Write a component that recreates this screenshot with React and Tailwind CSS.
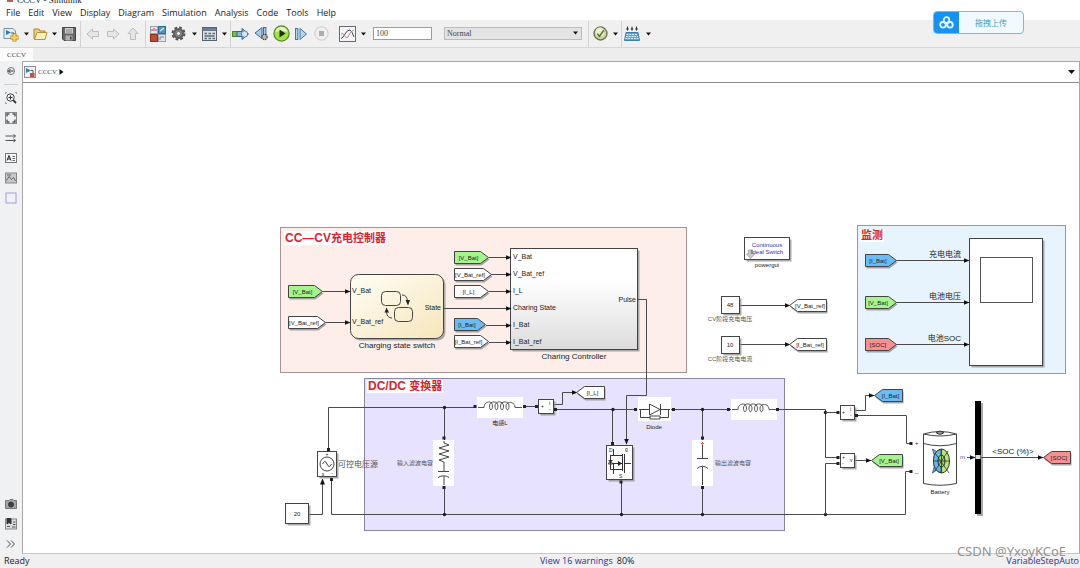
const MENUS = ['File', 'Edit', 'View', 'Display', 'Diagram', 'Simulation', 'Analysis', 'Code', 'Tools', 'Help']

const FILLS = { green: '#a6f58c', blue: '#6bbcf5', red: '#fa8f8f', white: '#ffffff' }

/* ---------- toolbar ---------- */

function ToolButton({ label, className = 'w-5', children }) {
  return (
    <button type="button" aria-label={label} className={`h-5 shrink-0 flex items-center justify-center ${className}`}>
      {children}
    </button>
  )
}

function Caret({ label }) {
  return (
    <button type="button" aria-label={label} className="h-5 w-3 shrink-0 flex items-center justify-center">
      <svg width="5" height="4" viewBox="0 0 5 4"><path d="M0 0.5H5L2.5 3.5Z" fill="#111" /></svg>
    </button>
  )
}

function Separator() {
  return <div className="h-[26px] w-px mx-0.5 shrink-0 bg-[#d2d2d2]" />
}

function NewIcon() {
  return (
    <svg width="16" height="16" viewBox="0 0 16 16">
      <path d="M1 2.5H10L12.5 5V12.5H1Z" fill="#e3eef7" stroke="#7a93a8" />
      <path d="M3 4L8 6.5L3 9Z" fill="#3479ad" />
      <path d="M8 7H11V10" fill="none" stroke="#456" />
      <path d="M11.5 7.5V15.5M7.5 11.5H15.5" stroke="#a77d1c" strokeWidth="4" />
      <path d="M11.5 8V15M8 11.5H15" stroke="#f7d552" strokeWidth="2.4" />
    </svg>
  )
}

function FolderIcon() {
  return (
    <svg width="15" height="14" viewBox="0 0 15 14">
      <path d="M1 12V2H6L7 4H12V12Z" fill="#f0ce72" stroke="#a98534" />
      <path d="M1.5 12.5L4 5.5H14L12 12.5Z" fill="#fdf0b8" stroke="#b5923e" />
    </svg>
  )
}

function SaveIcon() {
  return (
    <svg width="14" height="14" viewBox="0 0 14 14">
      <path d="M0.5 0.5H13.5V13.5H2L0.5 12Z" fill="#686868" stroke="#444" />
      <rect x="3" y="1" width="8" height="5.5" fill="#cfcfcf" />
      <path d="M4 3H10M4 5H10" stroke="#888" />
      <rect x="3.5" y="8.5" width="7" height="5" fill="#b2b2b2" />
      <rect x="8" y="9.5" width="1.6" height="3" fill="#444" />
    </svg>
  )
}

function ArrowIcon({ d }) {
  return (
    <svg width="14" height="14" viewBox="0 0 14 14">
      <path d={d} fill="#e6e6e6" stroke="#bdbdbd" />
    </svg>
  )
}

function LibraryIcon() {
  return (
    <svg width="16" height="16" viewBox="0 0 16 16">
      <rect x="0.5" y="0.5" width="7" height="7" fill="#e5e9ed" stroke="#98a0a8" />
      <rect x="8.5" y="0.5" width="7" height="7" fill="#4d95c8" stroke="#2d6f9e" />
      <rect x="0.5" y="8.5" width="7" height="7" fill="#c24a2c" stroke="#8e3118" />
      <rect x="8.5" y="8.5" width="7" height="7" fill="#dfe6ec" stroke="#98a0a8" />
      <path d="M2 5V3M4 5V2M6 5V3" stroke="#c36" />
      <path d="M10 5L14 2" stroke="#d8eefa" strokeWidth="1.3" />
      <path d="M10 14V11H14" fill="none" stroke="#68a" />
    </svg>
  )
}

function GearIcon() {
  return (
    <svg width="15" height="15" viewBox="0 0 15 15">
      <circle cx="7.5" cy="7.5" r="6" fill="none" stroke="#505050" strokeWidth="2" strokeDasharray="2.7 2" />
      <circle cx="7.5" cy="7.5" r="4.4" fill="#8f8f8f" stroke="#606060" strokeWidth="2.4" />
      <circle cx="7.5" cy="7.5" r="2" fill="#efefef" stroke="#555" strokeWidth="0.7" />
    </svg>
  )
}

function ExplorerIcon() {
  return (
    <svg width="15" height="14" viewBox="0 0 15 14">
      <rect x="0.5" y="0.5" width="14" height="13" fill="#dbe1e6" stroke="#5b646d" />
      <rect x="1" y="1" width="13" height="3" fill="#6b7d90" />
      <path d="M2.5 6.5H5M6.5 6.5H9M10.5 6.5H13M2.5 9H12.5M2.5 11.5H5M6.5 11.5H9M10.5 11.5H13" stroke="#56697b" strokeWidth="1.4" />
    </svg>
  )
}

function FastRestartIcon() {
  return (
    <svg width="18" height="14" viewBox="0 0 18 14">
      <rect x="0.5" y="4.5" width="6" height="5" fill="#7cba50" stroke="#4a8428" />
      <path d="M5 4.5H10V1.5L16.5 7L10 12.5V9.5H5Z" fill="#8db9dd" stroke="#34658f" />
      <circle cx="12.5" cy="7" r="3.2" fill="#d2e4f2" stroke="#4b799f" strokeWidth="0.9" />
    </svg>
  )
}

function StepBackIcon() {
  return (
    <svg width="15" height="15" viewBox="0 0 15 15">
      <path d="M8 1.5V12.5L1 7Z" fill="#a9cbe7" stroke="#3b6d98" />
      <rect x="9.5" y="1.5" width="2.4" height="8" fill="#a9cbe7" stroke="#3b6d98" />
      <circle cx="10.5" cy="11" r="2.6" fill="#bbb" stroke="#444" strokeWidth="1.3" strokeDasharray="1.4 0.7" />
    </svg>
  )
}

function RunIcon() {
  return (
    <svg width="17" height="17" viewBox="0 0 17 17">
      <circle cx="8.5" cy="8.5" r="7.6" fill="#a5e04b" stroke="#4f8b28" strokeWidth="1.2" />
      <path d="M2.6 7A6 6 0 0 1 14.4 7Q8.5 5 2.6 7Z" fill="#e3f7bd" />
      <path d="M6.5 4.5L12.5 8.5L6.5 12.5Z" fill="#183010" />
    </svg>
  )
}

function StepForwardIcon() {
  return (
    <svg width="14" height="14" viewBox="0 0 14 14">
      <rect x="1.5" y="1.5" width="2.4" height="11" fill="#b5d5ee" stroke="#3f77a5" />
      <path d="M6 1.5V12.5L12.5 7Z" fill="#b5d5ee" stroke="#3f77a5" />
    </svg>
  )
}

function StopIcon() {
  return (
    <svg width="15" height="15" viewBox="0 0 15 15">
      <circle cx="7.5" cy="7.5" r="6.7" fill="#efefef" stroke="#cacaca" />
      <rect x="5" y="5" width="5" height="5" fill="#adadad" />
    </svg>
  )
}

function ScopeIcon() {
  return (
    <svg width="17" height="16" viewBox="0 0 17 16">
      <rect x="0.5" y="0.5" width="16" height="15" fill="#f5f5f8" stroke="#6a6a72" />
      <path d="M2 12.5Q4 12 6 8T11 4Q13 5 15 11" fill="none" stroke="#4c4555" />
      <path d="M2 8Q4 6 6 10T10 9Q12 5 15 4" fill="none" stroke="#b58894" />
    </svg>
  )
}

function CheckIcon() {
  return (
    <svg width="15" height="15" viewBox="0 0 15 15">
      <circle cx="7.5" cy="7.5" r="6.5" fill="#c9d39c" stroke="#707558" strokeWidth="1.4" />
      <circle cx="7" cy="6" r="4.5" fill="#eaf0cc" />
      <path d="M4.3 7.8L6.5 10.2L10.8 4.3" fill="none" stroke="#55752b" strokeWidth="1.5" />
    </svg>
  )
}

function BuildIcon() {
  return (
    <svg width="16" height="16" viewBox="0 0 16 16">
      <path d="M3.5 0.5V3M8 0.5V3M12.5 0.5V3" stroke="#333" />
      <path d="M2 2.5H5L3.5 5ZM6.5 2.5H9.5L8 5ZM11 2.5H14L12.5 5Z" fill="#333" />
      <path d="M2 6.5H14L15.5 14.5H0.5Z" fill="#62a4d8" stroke="#3c7db2" />
      <path d="M2.5 8.5H13.5M2 10.5H14M1.5 12.5H14.5" stroke="#e3f1fb" strokeWidth="1.2" strokeDasharray="1.8 1" />
    </svg>
  )
}

function Toolbar() {
  return (
    <div className="h-7 flex items-center pl-0.5 bg-[#f0f0f0] border-b border-[#d6d6d6]">
      <ToolButton label="New model" className="w-[18px]"><NewIcon /></ToolButton>
      <Caret label="New options" />
      <ToolButton label="Open" className="w-4"><FolderIcon /></ToolButton>
      <Caret label="Open recent" />
      <ToolButton label="Save" className="w-[18px]"><SaveIcon /></ToolButton>
      <Separator />
      <ToolButton label="Back"><ArrowIcon d="M1 7L6.5 2V4.5H12.5V9.5H6.5V12Z" /></ToolButton>
      <ToolButton label="Forward"><ArrowIcon d="M13 7L7.5 2V4.5H1.5V9.5H7.5V12Z" /></ToolButton>
      <ToolButton label="Up to parent"><ArrowIcon d="M7 1L12 6.5H9.5V12.5H4.5V6.5H2Z" /></ToolButton>
      <Separator />
      <ToolButton label="Library browser"><LibraryIcon /></ToolButton>
      <ToolButton label="Model configuration"><GearIcon /></ToolButton>
      <Caret label="Configuration options" />
      <ToolButton label="Model explorer" className="w-[18px]"><ExplorerIcon /></ToolButton>
      <Caret label="Explorer options" />
      <div className="h-[26px] w-px shrink-0 bg-[#d2d2d2]" />
      <ToolButton label="Fast restart"><FastRestartIcon /></ToolButton>
      <ToolButton label="Step back"><StepBackIcon /></ToolButton>
      <ToolButton label="Run"><RunIcon /></ToolButton>
      <ToolButton label="Step forward"><StepForwardIcon /></ToolButton>
      <ToolButton label="Stop"><StopIcon /></ToolButton>
      <ToolButton label="Simulation data inspector" className="w-5 ml-1.5"><ScopeIcon /></ToolButton>
      <Caret label="Inspector options" />
      <input
        aria-label="Simulation stop time"
        defaultValue="100"
        className="ml-1 w-[59px] h-[13px] shrink-0 px-0.5 bg-white border border-[#9c9c9c] font-['Liberation_Serif',serif] text-[8px] leading-[11px] text-[#444]"
      />
      <div className="relative ml-3 w-[138px] h-[13px] shrink-0">
        <select
          aria-label="Simulation mode"
          defaultValue="Normal"
          className="block appearance-none w-full h-full px-0.5 bg-[#e3e3e3] border border-[#bcbcbc] font-['Liberation_Serif',serif] text-[8px] leading-[11px] text-[#444]"
        >
          <option>Normal</option>
          <option>Accelerator</option>
        </select>
        <svg className="absolute right-1 top-1 pointer-events-none" width="5" height="4" viewBox="0 0 5 4">
          <path d="M0 0.5H5L2.5 3.5Z" fill="#111" />
        </svg>
      </div>
      <div className="w-1 shrink-0" />
      <Separator />
      <ToolButton label="Model advisor" className="w-[18px]"><CheckIcon /></ToolButton>
      <Caret label="Advisor options" />
      <div className="h-[26px] w-px shrink-0 bg-[#d2d2d2]" />
      <ToolButton label="Build"><BuildIcon /></ToolButton>
      <Caret label="Build options" />
    </div>
  )
}

/* ---------- palette on the left ---------- */

function SideButton({ label, children }) {
  return (
    <button type="button" aria-label={label} className="w-full h-5 flex items-center justify-center">
      <svg width="12" height="12" viewBox="0 0 12 12" fill="none" stroke="#555">{children}</svg>
    </button>
  )
}

function Sidebar() {
  return (
    <aside className="w-[22px] shrink-0 flex flex-col bg-[#f0f1f3]">
      <SideButton label="Hide browser">
        <circle cx="6" cy="6" r="3.5" stroke="#777" />
        <path d="M3.5 6H8.5M5.5 4L3.5 6L5.5 8" stroke="#333" />
      </SideButton>
      <div className="h-px mx-1 my-[3px] bg-[#d0d0d0]" />
      <SideButton label="Zoom">
        <path d="M0.5 2V0.5H2M10 0.5H11.5V2M0.5 10V11.5H2" stroke="#999" />
        <circle cx="5.5" cy="5.5" r="3.7" stroke="#444" />
        <path d="M3.5 5.5H7.5M5.5 3.5V7.5" stroke="#333" />
        <path d="M8.2 8.2L11 11" stroke="#333" strokeWidth="1.8" />
      </SideButton>
      <SideButton label="Fit to view">
        <rect x="0.5" y="0.5" width="11" height="11" stroke="#888" />
        <path d="M2 4.5V2H4.5M7.5 2H10V4.5M10 7.5V10H7.5M4.5 10H2V7.5" stroke="#555" strokeWidth="1.4" />
      </SideButton>
      <SideButton label="Signal line">
        <path d="M0.5 4H10.5M0.5 8.5H10.5M8.5 2.5L10.5 4L8.5 5.5M8.5 7L10.5 8.5L8.5 10" />
      </SideButton>
      <SideButton label="Annotation">
        <rect x="0.5" y="1.5" width="11" height="9" fill="#f8f8f8" stroke="#777" />
        <path d="M2 8.5L4 3.5L6 8.5M2.8 7H5.2" stroke="#222" />
        <path d="M7.5 4.5H10M7.5 6.5H10M7.5 8.5H10" stroke="#666" />
      </SideButton>
      <SideButton label="Image">
        <rect x="0.5" y="1" width="11" height="10" fill="#c8c8c8" stroke="#888" />
        <path d="M1.5 8.5L4 4.5L6.5 7.5L8.5 5.5L10.5 9M2 3H6" stroke="#666" />
      </SideButton>
      <SideButton label="Area">
        <rect x="1" y="1" width="10" height="10" fill="#f0f0ff" stroke="#a2a0cc" />
      </SideButton>
      <div className="mt-auto">
        <SideButton label="Screenshot">
          <path d="M0.5 2.5H4L5 1.5H8L9 2.5H11.5V10.5H0.5Z" fill="#a5a5a5" stroke="#777" />
          <circle cx="6" cy="6.5" r="2.5" fill="#444" stroke="#333" />
        </SideButton>
        <SideButton label="Model data">
          <rect x="0.5" y="1" width="11" height="10" fill="#ddd" stroke="#888" />
          <path d="M2 0.5H6V6L4 4.5L2 6Z" fill="#333" stroke="#333" />
          <path d="M8 4H10.5M2 8.5H5M8 6.5H10.5M7 9H10.5" stroke="#555" />
        </SideButton>
        <SideButton label="Expand">
          <path d="M2 2.5L5.5 6L2 9.5M6 2.5L9.5 6L6 9.5" stroke="#444" />
        </SideButton>
      </div>
    </aside>
  )
}

/* ---------- diagram parts ---------- */

function T({ x, y, size = 7, anchor = 'start', fill = '#222', bold, children }) {
  return (
    <text x={x} y={y} fontSize={size} textAnchor={anchor} fill={fill} fontWeight={bold ? 700 : 400}>
      {children}
    </text>
  )
}

function Box({ x, y, w, h, fill = '#fff', rx = 0 }) {
  return (
    <g>
      <rect x={x + 2} y={y + 2} width={w} height={h} rx={rx} fill="#8f8f8f" opacity="0.75" />
      <rect x={x} y={y} width={w} height={h} rx={rx} fill={fill} stroke="#444" />
    </g>
  )
}

// From / Goto tag; `left` turns the point to the left
function Tag({ x, y, w, color = 'white', left, children }) {
  const h = 12
  const tip = 8
  const pts = left
    ? [[x, y + h / 2], [x + tip, y], [x + w, y], [x + w, y + h], [x + tip, y + h]]
    : [[x, y], [x + w - tip, y], [x + w, y + h / 2], [x + w - tip, y + h], [x, y + h]]
  const points = pts.map((p) => p.join(',')).join(' ')
  return (
    <g>
      <polygon points={points} fill="#8a8a8a" opacity="0.75" transform="translate(1 2)" />
      <polygon points={points} fill={FILLS[color]} stroke="#444" />
      <T x={left ? x + w / 2 + 2 : x + w / 2 - 3} y={y + 8} size={6} anchor="middle">{children}</T>
    </g>
  )
}

function Wire({ d, arrow }) {
  return <path d={d} fill="none" stroke="#4a4a4a" markerEnd={arrow ? 'url(#arrow)' : undefined} />
}

function Port({ x, y }) {
  return <rect x={x - 1.5} y={y - 1.5} width="3" height="3" fill="#222" />
}

function Dot({ x, y }) {
  return <circle cx={x} cy={y} r="1.7" fill="#1c1c30" />
}

function Coil({ x, y }) {
  return (
    <g>
      <rect x={x} y={y} width="46" height="21" fill="#fff" />
      <path
        transform={`translate(${x} ${y})`}
        d="M1 10.5H7C7 4 15.5 3 15.5 9C15.5 14 12.5 14 12.500 9C12.500 3.500 21 3.500 21 9C21 14 18 14 18 9C18 3.500 26.500 3.500 26.500 9C26.500 14 23.500 14 23.500 9C23.500 3.500 32 3.500 32 9C32 14 29 14 29 9C29 4 38 4 38 10.500H45"
        fill="none"
        stroke="#444"
        strokeWidth="0.900"
      />
    </g>
  )
}

function ControllerArea() {
  return (
    <g>
      <rect x="280.5" y="227.5" width="406" height="145" fill="#fdeeea" stroke="#a39394" />
      <rect x="284" y="231" width="104" height="14" fill="#fff" />
      <text x="285" y="242" fontWeight="700" fill="#d8232f" fontSize="12">
        CC—CV<tspan fontSize="11">充电控制器</tspan>
      </text>

      <Box x={350.5} y={274.5} w={93} h={64} rx={8} fill="url(#cream)" />
      <g fill="none" stroke="#444">
        <rect x="381.5" y="291.5" width="19" height="14" rx="4" />
        <rect x="394.5" y="307.5" width="18" height="14" rx="4" />
        <path d="M402 295Q407 295 407.5 301" />
        <path d="M392 318Q387 318 386.5 312" />
      </g>
      <path d="M405.5 300H410L408 305.5ZM384.5 312.5H389L386.5 307.5Z" fill="#222" />
      <T x={352} y={293}>V_Bat</T>
      <T x={352} y={324}>V_Bat_ref</T>
      <T x={441} y={310} anchor="end">State</T>
      <T x={397} y={348} size={8} anchor="middle">Charging state switch</T>

      <Wire d="M322 291.5H350" arrow />
      <Wire d="M325 322.5H350" arrow />
      <Tag x={288.5} y={285.5} w={34} color="green">[V_Bat]</Tag>
      <Tag x={288.5} y={316.5} w={37}>[V_Bat_ref]</Tag>

      <Box x={510.5} y={248.5} w={127} h={101} fill="url(#steel)" />
      <Wire d="M489 257.5H511" arrow />
      <Wire d="M491 274.5H511" arrow />
      <Wire d="M489 291.5H511" arrow />
      <Wire d="M444 308.5H511" arrow />
      <Wire d="M486 325.5H511" arrow />
      <Wire d="M489 342.5H511" arrow />
      <Tag x={454.5} y={251.5} w={34} color="green">[V_Bat]</Tag>
      <Tag x={454.5} y={268.5} w={37}>[V_Bat_ref]</Tag>
      <Tag x={454.5} y={285.5} w={34}>[I_L]</Tag>
      <Tag x={454.5} y={318.5} w={31} color="blue">[I_Bat]</Tag>
      <Tag x={454.5} y={335.5} w={34}>[I_Bat_ref]</Tag>
      <T x={513} y={259}>V_Bat</T>
      <T x={513} y={276}>V_Bat_ref</T>
      <T x={513} y={293}>I_L</T>
      <T x={513} y={310}>Charing State</T>
      <T x={513} y={327}>I_Bat</T>
      <T x={513} y={344}>I_Bat_ref</T>
      <T x={636} y={302} anchor="end">Pulse</T>
      <T x={574} y={359} size={8} anchor="middle">Charing Controller</T>
    </g>
  )
}

function References() {
  return (
    <g>
      <Box x={744.5} y={237.5} w={45} h={22} />
      <path d="M748.5 250H752.5V254H754.5L750.5 258.5L746.5 254H748.5Z" fill="#ccc" stroke="#aaa" />
      <T x={767} y={247} size={6} anchor="middle" fill="#3a30b0">Continuous</T>
      <T x={767} y={254} size={6} anchor="middle" fill="#3a30b0">Ideal Switch</T>
      <T x={767} y={267} size={6} anchor="middle">powergui</T>

      <Wire d="M740 305.5H790" arrow />
      <Box x={721.5} y={296.5} w={18} h={17} />
      <T x={730} y={307} size={6} anchor="middle">48</T>
      <T x={730} y={321} size={6} anchor="middle" fill="#555">CV阶段充电电压</T>
      <Tag x={789.5} y={299.5} w={37} left>[V_Bat_ref]</Tag>

      <Wire d="M740 344.5H790" arrow />
      <Box x={721.5} y={336.5} w={18} h={17} />
      <T x={730} y={347} size={6} anchor="middle">10</T>
      <T x={730} y={361} size={6} anchor="middle" fill="#555">CC阶段充电电流</T>
      <Tag x={789.5} y={338.5} w={37} left>[I_Bat_ref]</Tag>
    </g>
  )
}

function MonitorArea() {
  return (
    <g>
      <rect x="857.5" y="225.5" width="208" height="148" fill="#e7f4fe" stroke="#8c9bab" />
      <rect x="860" y="229" width="24" height="13" fill="#fff" />
      <T x={861} y={239} size={11} bold fill="#d8232f">监测</T>
      <Box x={969.5} y={238.5} w={73} h={127} />
      <rect x="980.5" y="257.5" width="52" height="45" fill="#fff" stroke="#555" />
      <Wire d="M896 260.5H969" arrow />
      <Wire d="M896 302.5H969" arrow />
      <Wire d="M896 344.5H969" arrow />
      <Tag x={865.5} y={254.5} w={31} color="blue">[I_Bat]</Tag>
      <Tag x={865.5} y={296.5} w={31} color="green">[V_Bat]</Tag>
      <Tag x={865.5} y={338.5} w={31} color="red">[SOC]</Tag>
      <T x={961} y={257} size={8} anchor="end">充电电流</T>
      <T x={961} y={299} size={8} anchor="end">电池电压</T>
      <T x={961} y={341} size={8} anchor="end">电池SOC</T>
    </g>
  )
}

function ConverterArea() {
  return (
    <g>
      <rect x="364.5" y="378.5" width="420" height="152" fill="#e7e3fe" stroke="#8884a6" />
      <rect x="367" y="380" width="76" height="13" fill="#fff" />
      <text x="368" y="390" fontWeight="700" fill="#d8232f" fontSize="12">
        DC/DC <tspan fontSize="11">变换器</tspan>
      </text>

      {/* power wires */}
      <Wire d="M328.5 449V407.5H475" />
      <Wire d="M331.5 478V514.5H905.5V471.5H911" />
      <Wire d="M309 514.5H322.5V479" arrow />
      <Wire d="M444.5 407.5V440M444.5 486V514.5" />
      <Wire d="M523 406.5H538" />
      <Wire d="M554 404.5H562.5V392.5H577" arrow />
      <Wire d="M554 409.5H637M671 409.5H731M776 409.5H825.5V457.5H838" />
      <Wire d="M612.5 409.5V444" />
      <Wire d="M638 299.5H646.5V395.5H626.5V444" arrow />
      <Wire d="M621.5 481V514.5" />
      <Wire d="M702.5 409.5V440M702.5 486V514.5" />

      {/* controlled source */}
      <Box x={317.5} y={451.5} w={19} h={25} />
      <circle cx="327" cy="464" r="7" fill="#fff" stroke="#444" />
      <path d="M322.5 464Q325 459 327 464T331.5 464" fill="none" stroke="#444" />
      <T x={327} y={456} size={5} anchor="middle">+</T>
      <T x={323} y={476} size={5} anchor="middle">s</T>
      <T x={332} y={475} size={5} anchor="middle">-</T>
      <Port x={328.5} y={449.5} />
      <Port x={331.5} y={479.5} />
      <T x={338} y={467} size={8} fill="#555">可控电压源</T>
      <Box x={285.5} y={503.5} w={23} h={20} />
      <T x={297} y={516} size={6} anchor="middle">20</T>

      {/* input filter */}
      <rect x="433" y="440" width="21" height="46" fill="#fff" />
      <path d="M444 441V443L449 445L439 448L449 451L439 454L449 457L439 460L444 462V471M438 471.5H449M438 477.5Q444 474 449 477.5M444 476V485" fill="none" stroke="#444" />
      <T x={397} y={465} size={6} fill="#555">输入滤波电容</T>

      <Coil x={477} y={397} />
      <T x={500} y={425} size={6} anchor="middle">电感L</T>
      <Box x={538.5} y={399.5} w={15} h={14} />
      <T x={541} y={408} size={5}>+</T>
      <T x={549} y={405} size={5}>i</T>
      <T x={549} y={411} size={5}>-</T>
      <Tag x={576.5} y={386.5} w={28} left>[I_L]</Tag>

      {/* diode */}
      <rect x="638" y="397" width="33" height="24" fill="#fff" />
      <path d="M639 409.5H649M660 409.5H670M649.5 404V415L660 409.5ZM660.5 404V415M640.5 409.5V417.5H650M660 417.5H668.5V409.5M650 416V419H660V416Z" fill="none" stroke="#444" />
      <T x={654} y={429} size={6} anchor="middle">Diode</T>

      {/* mosfet */}
      <Box x={606.5} y={445.5} w={26} h={34} />
      <path d="M613.5 449V455.5H622M610 455.5H622M622.5 454V471M624.5 454V473M625 463.5H631M612 463.5H622M613.5 463.5V474M610.5 455.5V469.5H622M608.5 464H612.5L610.5 460ZM608.5 460.5H612.5" fill="none" stroke="#333" />
      <path d="M622 463.5L618 461V466Z" fill="#222" />
      <T x={609} y={452} size={5}>D</T>
      <T x={625} y={451} size={5}>g</T>
      <T x={619} y={478} size={5}>S</T>

      {/* output filter */}
      <rect x="692" y="440" width="21" height="46" fill="#fff" />
      <path d="M702.5 443V458.5M697 458.5H708M697 468.5Q702.5 464 708 468.5M702.5 466.5V485" fill="none" stroke="#444" />
      <path d="M701 443.5H704M702.5 442V445" stroke="#d66" />
      <T x={715} y={465} size={6} fill="#555">输出滤波电容</T>
      <Coil x={731} y={399} />

      <Port x={475} y={406.5} />
      <Port x={524.5} y={406.5} />
      <Port x={536.5} y={406.5} />
      <Port x={555.5} y={409.5} />
      <Port x={635.5} y={409.5} />
      <Port x={673.5} y={409.5} />
      <Port x={728.5} y={409.5} />
      <Port x={777.5} y={409.5} />
      <Port x={444} y={438} />
      <Port x={444} y={487.5} />
      <Port x={702.5} y={438} />
      <Port x={702.5} y={487.5} />
      <Port x={612.5} y={443.5} />
      <Port x={621} y={482} />
      <Dot x={444.5} y={407.5} />
      <Dot x={444.5} y={514.5} />
      <Dot x={613} y={409.5} />
      <Dot x={621.5} y={514.5} />
      <Dot x={702.5} y={409.5} />
      <Dot x={702.5} y={514.5} />
      <Dot x={825.5} y={412.5} />
      <Dot x={825.5} y={514.5} />
    </g>
  )
}

function BatterySide() {
  return (
    <g>
      <Wire d="M825.5 412.5H838" />
      <Wire d="M838 463.5H825.5V514.5" />
      <Wire d="M855 410.5H865.5V395.5H874" arrow />
      <Wire d="M856 415.5H906.5V443.5H911" />
      <Wire d="M855 460.5H871" arrow />
      <Box x={840.5} y={405.5} w={14} h={14} />
      <Box x={840.5} y={453.5} w={14} h={14} />
      <T x={842} y={414} size={5}>+</T>
      <T x={850} y={411} size={5}>i</T>
      <T x={850} y={417} size={5}>-</T>
      <T x={842} y={459} size={5}>+</T>
      <T x={850} y={462} size={5}>v</T>
      <T x={842} y={465} size={5}>-</T>
      <Port x={838} y={412.5} />
      <Port x={838} y={457.5} />
      <Port x={838} y={463.5} />
      <Port x={856.5} y={415.5} />
      <Port x={911} y={443.5} />
      <Port x={911} y={471.5} />
      <T x={915} y={445} size={6}>+</T>
      <T x={915} y={473} size={6}>_</T>
      <Tag x={874.5} y={389.5} w={28} color="blue" left>[I_Bat]</Tag>
      <Tag x={871.5} y={454.5} w={31} color="green" left>[V_Bat]</Tag>

      {/* battery cell */}
      <path d="M923.5 434V483.5Q940 487 956.5 483.5V434" fill="#fff" stroke="#444" />
      <path d="M923.5 434Q940 429 956.5 434Q940 438 923.5 434ZM923.5 443.5Q940 448 956.5 443.5" fill="#fff" stroke="#444" />
      <path d="M936 432.5Q940 429.5 944 432.5Q940 436 936 432.5Z" fill="#999" stroke="#333" />
      <path d="M932.5 449Q937 461 932.5 473L942 466V455Z" fill="#65b9ec" stroke="#345" strokeWidth="0.8" />
      <ellipse cx="941.5" cy="461" rx="8" ry="12" fill="#b7e873" stroke="#333" />
      <path d="M941 449.5C931 451 931 471 941 472.5Z" fill="#65b9ec" stroke="#333" strokeWidth="0.8" />
      <ellipse cx="941.5" cy="461" rx="3.5" ry="6" fill="#9ed46c" stroke="#222" />
      <path d="M933 461H950M941.5 449V473M935 453L949 473M935 471L948 451" stroke="#234" strokeWidth="0.8" fill="none" />
      <T x={940} y={494} size={6} anchor="middle">Battery</T>
      <T x={960} y={459} size={6} fill="#55508a">m</T>

      {/* bus selector */}
      <Wire d="M967 457.5H975" arrow />
      <rect x="977" y="403" width="6" height="113" fill="#aaa" />
      <rect x="975" y="401" width="6" height="113" fill="#000" />
      <rect x="975.5" y="455" width="5" height="4" fill="#ddd" />
      <Wire d="M981 457.5H1043" arrow />
      <T x={1013} y={454} size={8} anchor="middle">&lt;SOC (%)&gt;</T>
      <Tag x={1043.5} y={451.5} w={27} color="red" left>[SOC]</Tag>
    </g>
  )
}

function Diagram() {
  return (
    <svg
      viewBox="23 83 1056 470"
      className="block w-full font-['Liberation_Sans','Noto_Sans_CJK_SC',sans-serif]"
      role="img"
      aria-label="CCCV model"
    >
      <defs>
        <marker id="arrow" viewBox="0 0 6 6" refX="5.5" refY="3" markerWidth="6" markerHeight="6" markerUnits="userSpaceOnUse" orient="auto">
          <path d="M0 0.5L6 3L0 5.5Z" fill="#111" />
        </marker>
        <linearGradient id="cream" x1="0" y1="0" x2="1" y2="1">
          <stop offset="0" stopColor="#fffdf4" />
          <stop offset="1" stopColor="#f7e6bd" />
        </linearGradient>
        <linearGradient id="steel" x1="0" y1="0" x2="0" y2="1">
          <stop offset="0.3" stopColor="#fff" />
          <stop offset="1" stopColor="#dcdcdc" />
        </linearGradient>
      </defs>
      <ControllerArea />
      <References />
      <MonitorArea />
      <ConverterArea />
      <BatterySide />
    </svg>
  )
}

function ModelIcon() {
  return (
    <svg width="12" height="12" viewBox="0 0 12 12">
      <rect x="0.5" y="0.5" width="11" height="11" fill="#eef2f6" stroke="#8b8f9b" />
      <path d="M2 2L7 4.5L2 7Z" fill="#3b7db3" />
      <path d="M7 4.5H9V7" fill="none" stroke="#555" />
      <rect x="6" y="7" width="4.5" height="4" fill="#b8553f" />
    </svg>
  )
}

function UploadWidget() {
  return (
    <button
      type="button"
      className="absolute right-14 top-[11px] w-[91px] h-[23px] flex items-stretch overflow-hidden rounded border border-[#6fc0dd] bg-[#f0faff]"
    >
      <span className="w-[25px] flex items-center justify-center bg-[#1592f2]">
        <svg width="15" height="13" viewBox="0 0 15 13" fill="none" stroke="#e9f8ff" strokeWidth="1.8">
          <circle cx="7.5" cy="4" r="2.8" />
          <circle cx="4" cy="8.8" r="2.8" />
          <circle cx="11" cy="8.8" r="2.8" />
        </svg>
      </span>
      <span className="flex-1 flex items-center justify-center font-['Noto_Sans_CJK_SC',sans-serif] text-[8px] leading-none text-[#3f9fc0]">
        拖拽上传
      </span>
    </button>
  )
}

export default function App() {
  return (
    <div className="relative min-h-screen flex flex-col overflow-hidden bg-[#f0f0f0] font-['Open_Sans',sans-serif] text-[9px] leading-3 text-[#222]">
      <header className="bg-white">
        <div className="h-[5px] flex items-end gap-1 pl-[7px] overflow-hidden font-['Liberation_Serif',serif] text-[9px] leading-[10px]">
          <span className="w-1.5 h-1 mb-[3px] bg-[#b8604c]" />
          <span>CCCV - Simulink</span>
        </div>
        <nav className="h-[15px] flex items-center gap-2 pl-1.5">
          {MENUS.map((m) => (
            <button key={m} type="button">{m}</button>
          ))}
        </nav>
      </header>

      <Toolbar />

      <div className="h-[13px] flex bg-[#ededed]">
        <button type="button" className="w-[33px] bg-[#fbfbfb] font-['Liberation_Serif',serif] text-[7px] leading-3 text-[#444]">CCCV</button>
      </div>

      <div className="flex-1 flex">
        <Sidebar />
        <main className="flex-1 min-w-0 flex flex-col bg-white border border-[#a8a8a8] border-b-[#c8c8c8]">
          <div className="h-[21px] flex items-center pl-px pr-1 gap-0.5 border-b border-[#8f8f8f]">
            <ModelIcon />
            <a href="#cccv" className="font-['Liberation_Serif',serif] text-[7px] text-[#444]">CCCV</a>
            <svg width="5" height="6" viewBox="0 0 5 6"><path d="M0.5 0L4.5 3L0.5 6Z" fill="#111" /></svg>
            <button type="button" aria-label="Path history" className="ml-auto">
              <svg width="7" height="4" viewBox="0 0 7 4"><path d="M0 0H7L3.5 4Z" fill="#111" /></svg>
            </button>
          </div>
          <Diagram />
        </main>
      </div>

      <footer className="h-[14px] flex items-center">
        <span className="w-1/2 pl-1">Ready</span>
        <a href="#warnings" className="text-[#302f8c]">View 16 warnings</a>
        <span className="ml-1">80%</span>
        <span className="ml-auto pr-px text-[#302f8c]">VariableStepAuto</span>
      </footer>

      <UploadWidget />
      <div className="absolute right-[14px] bottom-[9px] font-['Noto_Sans',sans-serif] text-[13px] leading-4 text-[#929292] pointer-events-none">
        CSDN @YxoyKCoE
      </div>
    </div>
  )
}
